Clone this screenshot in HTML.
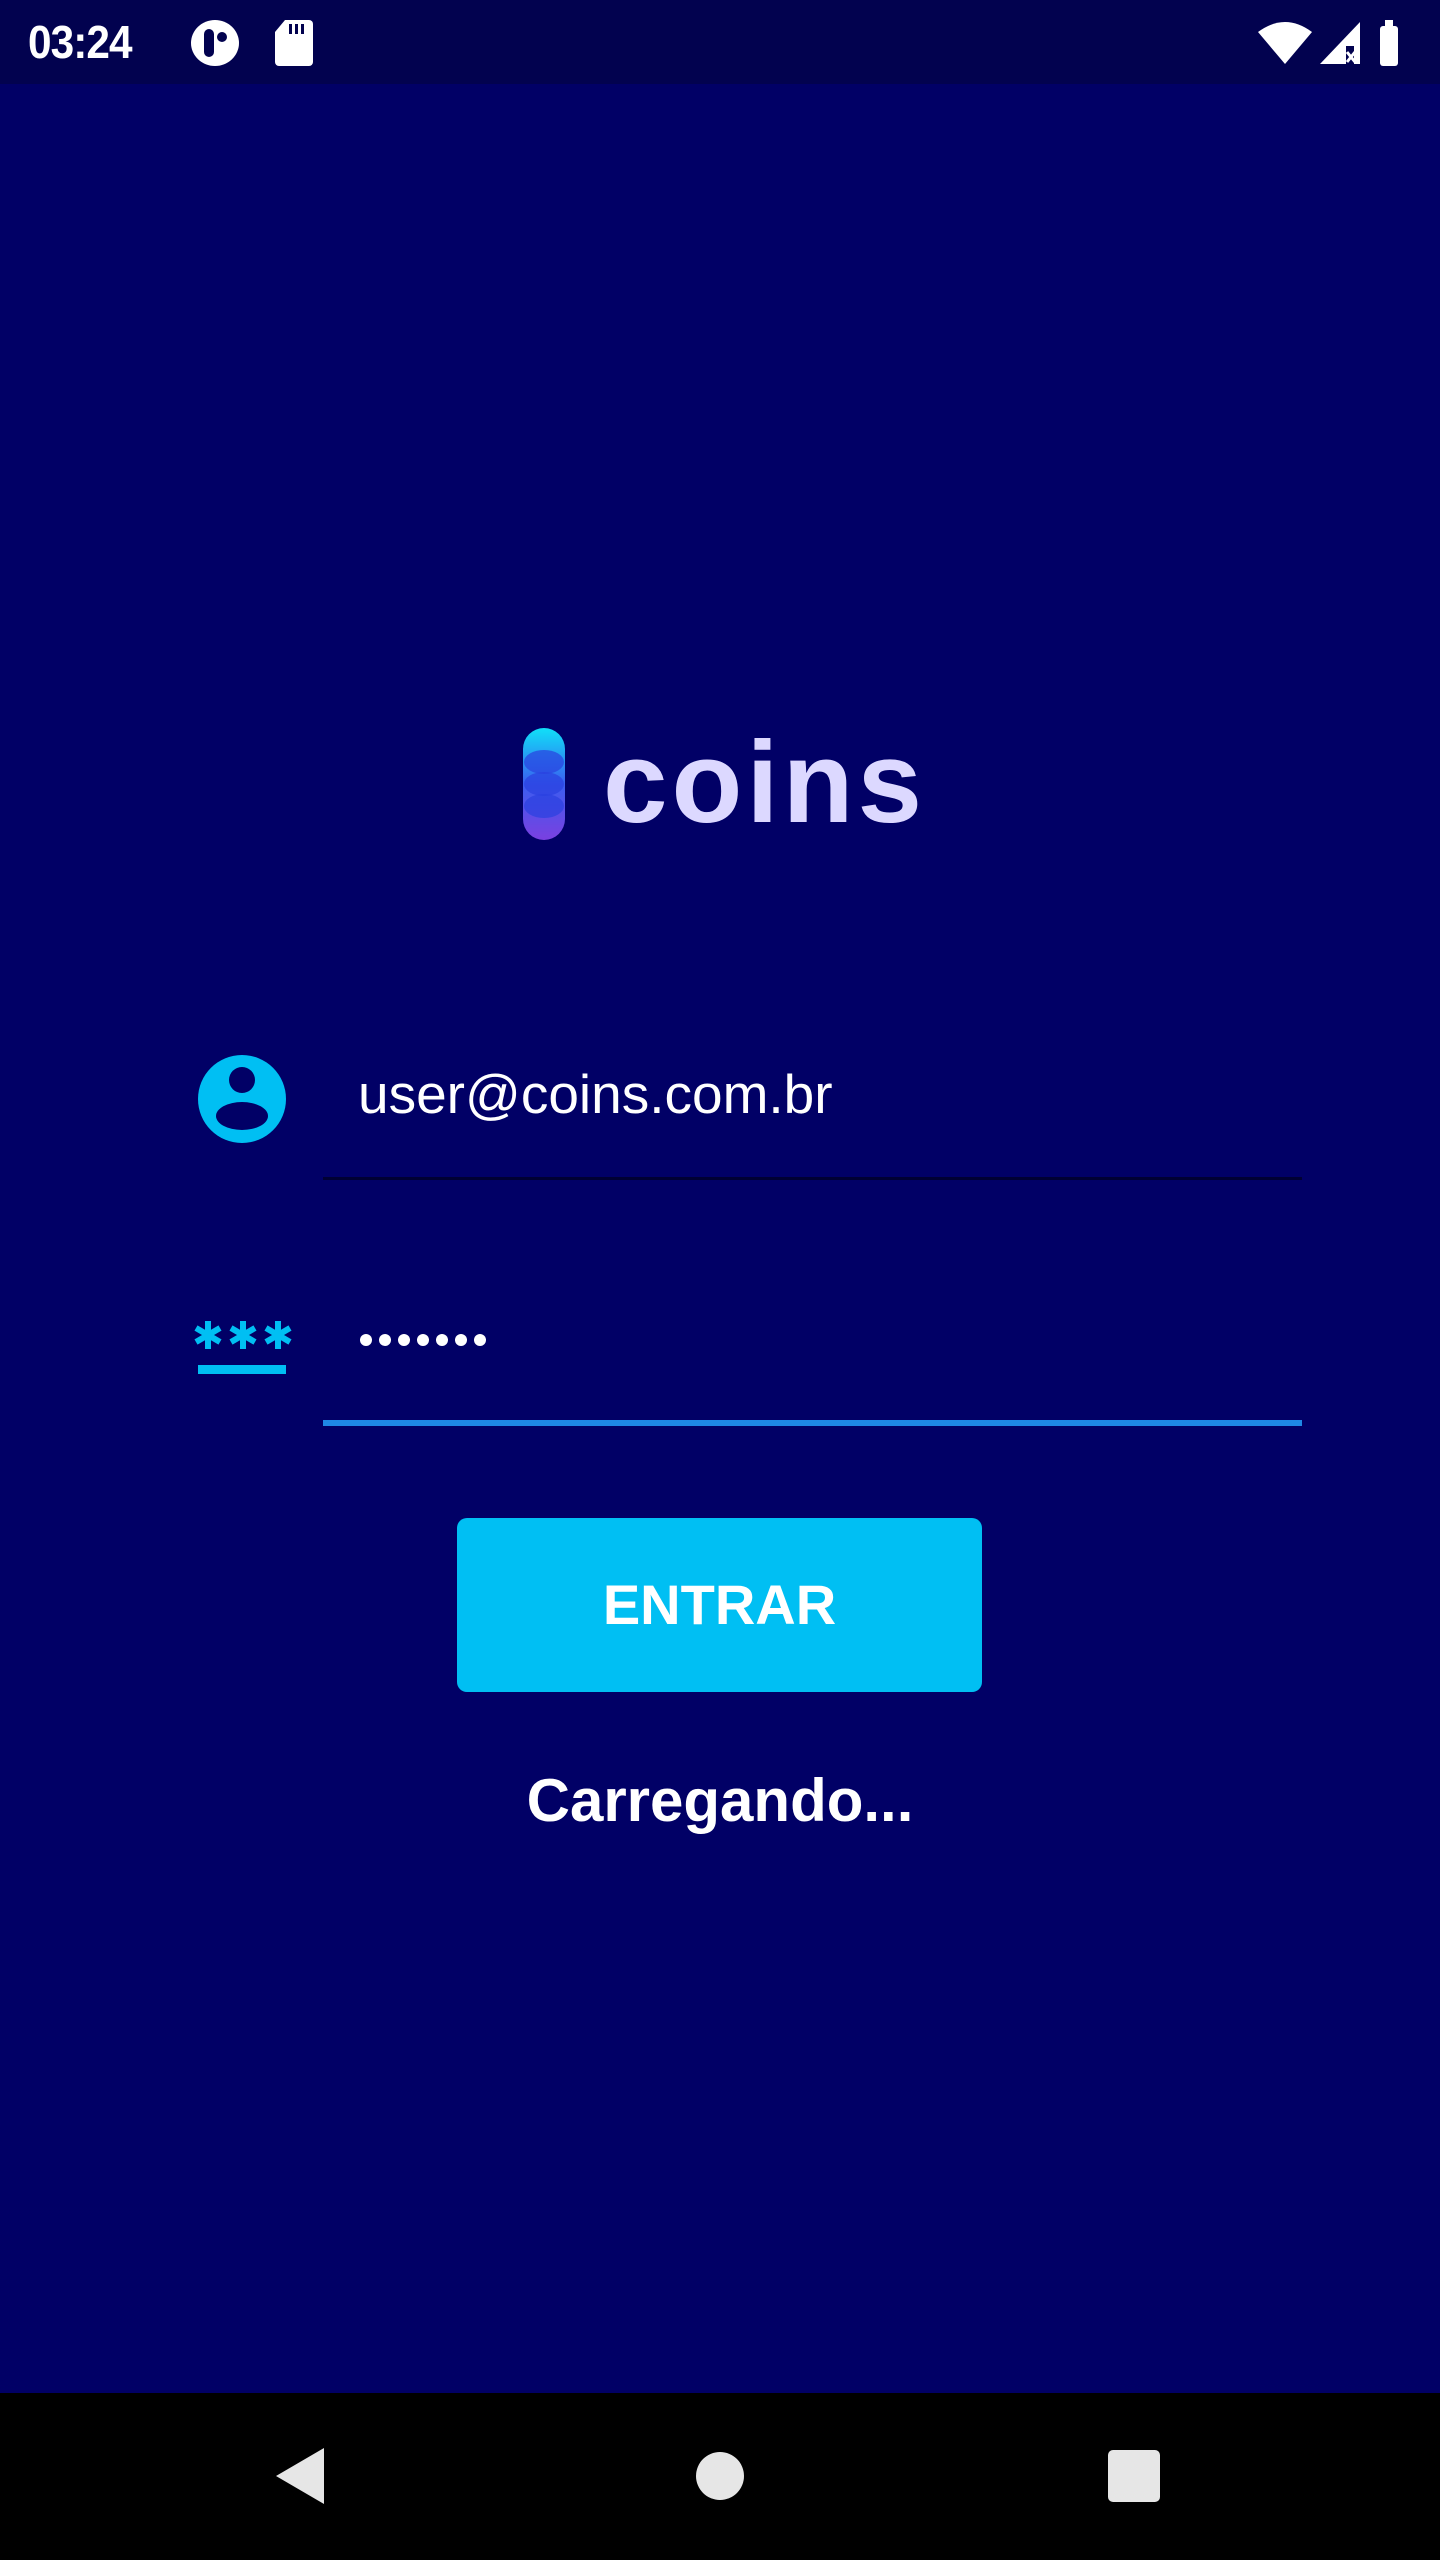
<!DOCTYPE html>
<html><head><meta charset="utf-8"><style>
*{margin:0;padding:0;box-sizing:border-box}
body{width:1440px;height:2560px;background:#010066;position:relative;overflow:hidden;font-family:"Liberation Sans",sans-serif;color:#fff}
.abs{position:absolute}
</style></head><body>
<div class="abs" style="left:0;top:0;width:1440px;height:84px;background:#02024f"></div>
<div class="abs" style="left:28px;top:14px;font-size:46px;line-height:56px;letter-spacing:-1px;font-weight:bold;transform:scaleX(.92);transform-origin:left">03:24</div>
<svg class="abs" style="left:190px;top:20px" width="50" height="46" viewBox="0 0 50 46"><ellipse cx="25" cy="23" rx="24" ry="23" fill="#fff"/><rect x="14" y="9" width="10" height="28" rx="5" fill="#02024f"/><circle cx="32" cy="17" r="5" fill="#02024f"/></svg>
<svg class="abs" style="left:275px;top:20px" width="38" height="46" viewBox="0 0 38 46"><path d="M10 0H34a4 4 0 0 1 4 4V42a4 4 0 0 1-4 4H4a4 4 0 0 1-4-4V12Z" fill="#fff"/><rect x="14" y="4" width="3" height="10" fill="#02024f"/><rect x="20" y="4" width="3" height="10" fill="#02024f"/><rect x="26" y="4" width="3" height="10" fill="#02024f"/></svg>
<svg class="abs" style="left:1258px;top:20px" width="180" height="46" viewBox="0 0 180 46"><path d="M0 12Q27-8 54 12L27 44Z" fill="#fff"/><path d="M62 44L102 2V44Z" fill="#fff"/><path d="M88 26H96V44H88Z" fill="#02024f"/><path d="M89 32l8 10M97 32l-8 10" stroke="#fff" stroke-width="3"/><rect x="122" y="6" width="18" height="40" rx="3" fill="#fff"/><rect x="127" y="0" width="8" height="8" fill="#fff"/></svg>

<svg class="abs" style="left:520px;top:726px" width="50" height="116" viewBox="0 0 50 116"><defs><linearGradient id="g" x1="0" y1="0" x2="0" y2="1"><stop offset="0" stop-color="#10e0f8"/><stop offset=".5" stop-color="#3a5ef0"/><stop offset="1" stop-color="#7a40e0"/></linearGradient></defs><rect x="3" y="2" width="42" height="112" rx="21" fill="url(#g)"/><ellipse cx="24" cy="36" rx="20" ry="12" fill="#2a40e0" opacity=".7"/><ellipse cx="24" cy="58" rx="20" ry="12" fill="#2a40e0" opacity=".7"/><ellipse cx="24" cy="80" rx="20" ry="12" fill="#2a40e0" opacity=".7"/></svg>
<div class="abs" style="left:603px;top:712px;font-size:116px;line-height:140px;color:#dcd8ff;letter-spacing:4px;font-weight:bold;-webkit-text-stroke:0px">coins</div>

<svg class="abs" style="left:198px;top:1055px" width="88" height="88" viewBox="0 0 88 88"><circle cx="44" cy="44" r="44" fill="#00bff3"/><circle cx="44" cy="25" r="13" fill="#010066"/><ellipse cx="44" cy="61" rx="26" ry="14" fill="#010066"/></svg>
<div class="abs" style="left:358px;top:1062px;font-size:55px;line-height:64px">user@coins.com.br</div>
<div class="abs" style="left:323px;top:1177px;width:979px;height:3px;background:#000033"></div>

<svg class="abs" style="left:194px;top:1320px" width="98" height="30" viewBox="0 0 98 30"><g stroke="#00bff3" stroke-width="6"><g id="a"><path d="M14 1V29M2 8L26 22M2 22L26 8"/></g><use href="#a" x="35"/><use href="#a" x="70"/></g></svg>
<div class="abs" style="left:198px;top:1365px;width:88px;height:9px;background:#00bff3"></div>
<svg class="abs" style="left:360px;top:1330px" width="130" height="20" viewBox="0 0 130 20"><g fill="#fff"><circle cx="6" cy="10" r="6"/><circle cx="25" cy="10" r="6"/><circle cx="44" cy="10" r="6"/><circle cx="63" cy="10" r="6"/><circle cx="82" cy="10" r="6"/><circle cx="101" cy="10" r="6"/><circle cx="120" cy="10" r="6"/></g></svg>
<div class="abs" style="left:323px;top:1420px;width:979px;height:6px;background:#1e88e5"></div>

<div class="abs" style="left:457px;top:1518px;width:525px;height:174px;background:#00bff3;border-radius:10px;font-size:56px;line-height:174px;text-align:center;font-weight:bold">ENTRAR</div>
<div class="abs" style="left:0;top:1765px;width:1440px;text-align:center;font-size:60px;line-height:72px;font-weight:bold">Carregando...</div>

<div class="abs" style="left:0;top:2393px;width:1440px;height:167px;background:#000"></div>
<svg class="abs" style="left:272px;top:2446px" width="56" height="60" viewBox="0 0 56 60"><path d="M52 2V58L4 30Z" fill="#e6e6e6"/></svg>
<div class="abs" style="left:696px;top:2452px;width:48px;height:48px;border-radius:50%;background:#e6e6e6"></div>
<div class="abs" style="left:1108px;top:2450px;width:52px;height:52px;border-radius:5px;background:#e6e6e6"></div>
</body></html>
